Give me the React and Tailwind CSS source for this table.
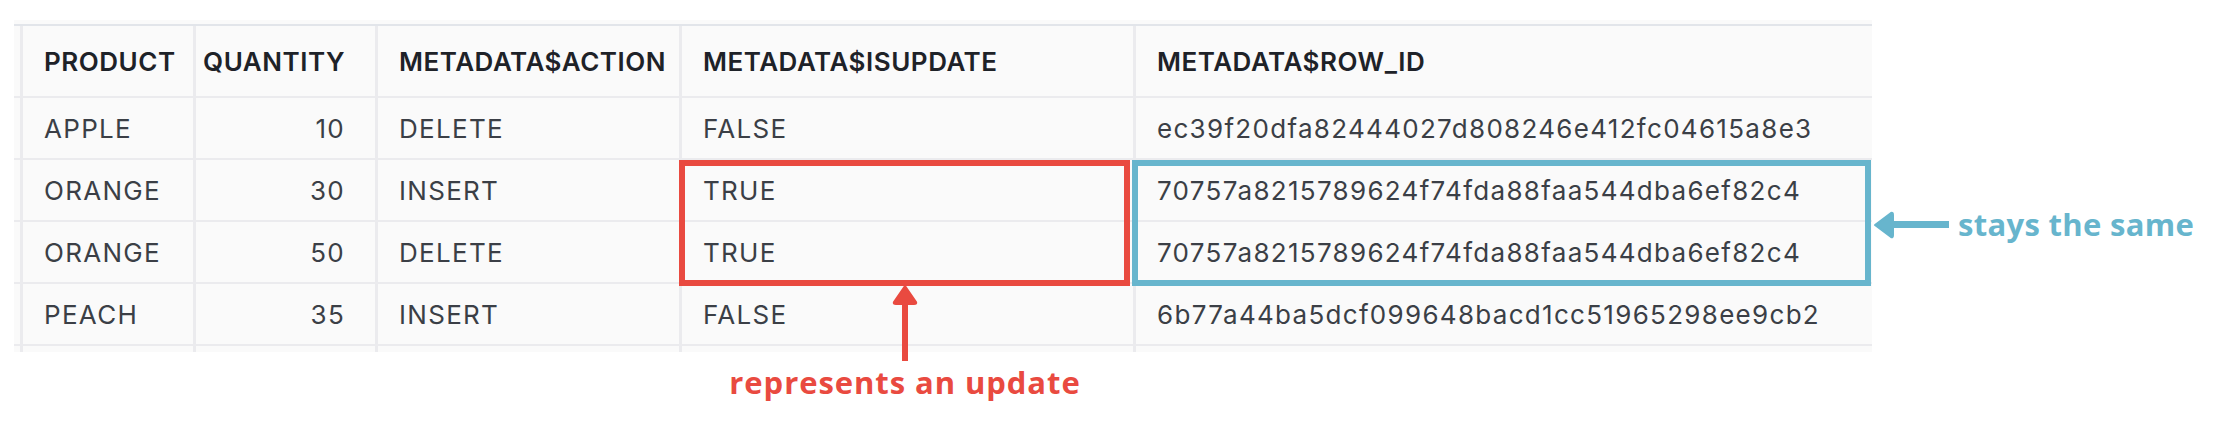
import React from "react";

const COLS = ["w-[173px]", "w-[182px]", "w-[304px]", "w-[454px]", "w-[739px]"];

const rows = [
  ["APPLE", "10", "DELETE", "FALSE", "ec39f20dfa82444027d808246e412fc04615a8e3"],
  ["ORANGE", "30", "INSERT", "TRUE", "70757a8215789624f74fda88faa544dba6ef82c4"],
  ["ORANGE", "50", "DELETE", "TRUE", "70757a8215789624f74fda88faa544dba6ef82c4"],
  ["PEACH", "35", "INSERT", "FALSE", "6b77a44ba5dcf099648bacd1cc51965298ee9cb2"],
];

const header = ["PRODUCT", "QUANTITY", "METADATA$ACTION", "METADATA$ISUPDATE", "METADATA$ROW_ID"];

// one table line: 6px gutter then the five cells
const Row = ({ cells, head }) => (
  <div className={`flex border-b-2 border-[#ebebee] ${head ? "h-[72px]" : "h-[62px]"}`}>
    <div className="w-[6px] shrink-0" />
    {cells.map((c, i) => (
      <div
        key={i}
        className={`${COLS[i]} shrink-0 flex items-center border-l-[3px] border-[#ebebee] ${
          i === 1 ? "justify-end pr-[30px]" : "pl-[21px]"
        } ${
          head
            ? "font-semibold text-[#1e2228] tracking-[0.02em]"
            : "text-[#3b3f46] tracking-[0.05em]"
        } text-[26px] whitespace-nowrap`}
      >
        {c}
      </div>
    ))}
  </div>
);

const App = () => {
  return (
    <div
      className="w-[2218px] h-[422px] bg-white overflow-hidden flex pt-5 pl-[14px]"
      style={{ fontFamily: "Inter, 'Noto Sans', sans-serif" }}
    >
      <div className="flex flex-col">
        <div className="relative w-[1858px] bg-[#fafafa] pt-1">
          <div className="border-t-2 border-[#e2e5ea]">
            <Row cells={header} head />
            {rows.map((r, i) => (
              <Row key={i} cells={r} />
            ))}
            {/* cut-off row at the bottom */}
            <div className="flex h-[6px]">
              <div className="w-[6px] shrink-0" />
              {COLS.map((w, i) => (
                <div key={i} className={`${w} shrink-0 border-l-[3px] border-[#ebebee]`} />
              ))}
            </div>
          </div>

          {/* highlights over the table */}
          <div className="absolute left-[665px] top-[140px] w-[451px] h-[126px] border-[6px] border-[#e94a40]" />
          <div className="absolute left-[1118px] top-[140px] w-[739px] h-[126px] border-[6px] border-[#67b5cd]" />
        </div>

        {/* red arrow + label, pulled up over the table bottom */}
        <div className="relative w-[400px] ml-[691px] -mt-[69px] flex flex-col items-center">
          <svg width="30" height="80" viewBox="0 0 30 80">
            <path d="M15 3 L4 19 Q3 21 6 21 L24 21 Q27 21 26 19 Z" fill="#e94a40" stroke="#e94a40" strokeWidth="2" strokeLinejoin="round" />
            <rect x="12" y="18" width="6" height="60" fill="#e94a40" />
          </svg>
          <div
            className="-mt-[4px] text-[31px] font-bold tracking-[0.03em] text-[#e94a40] whitespace-nowrap"
            style={{ fontFamily: "'Open Sans', sans-serif" }}
          >
            represents an update
          </div>
        </div>
      </div>

      {/* blue arrow + label */}
      <div className="mt-[190px] h-[30px] flex items-center gap-[8px] self-start">
        <svg width="78" height="30" viewBox="0 0 78 30">
          <path d="M3 15 L19 3 Q21 2 21 5 L21 25 Q21 28 19 27 Z" fill="#67b5cd" stroke="#67b5cd" strokeWidth="2" strokeLinejoin="round" />
          <rect x="18" y="11" width="59" height="7" fill="#67b5cd" />
        </svg>
        <div
          className="text-[31px] font-bold tracking-[0.01em] text-[#67b5cd] whitespace-nowrap -mt-[2px]"
          style={{ fontFamily: "'Open Sans', sans-serif" }}
        >
          stays the same
        </div>
      </div>
    </div>
  );
};

export default App;
